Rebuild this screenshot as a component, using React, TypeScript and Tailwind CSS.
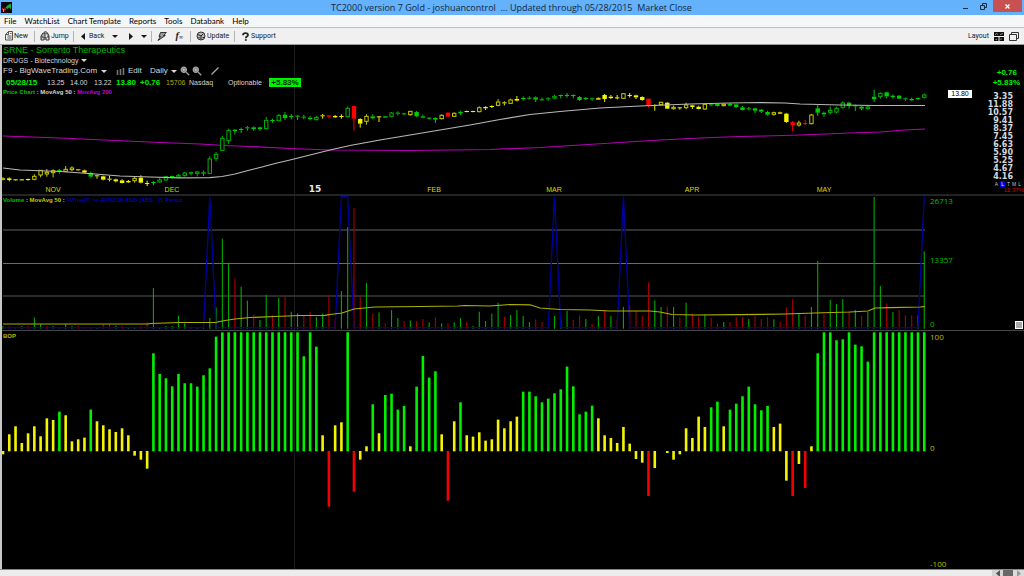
import type { ReactNode } from "react";

const STEP = 6.267;
const barX = (i: number) => 3 + i * STEP;

const PALETTE: Record<string, string> = { g: "#00cc00", y: "#f4f400", r: "#ff0000", G: "#00b400", Y: "#c8c800" };

// Candles: kind (upper case = hollow body), high, body top, body bottom, low, in thirds of a pixel.
const CANDLE_GROUPS: { base: number; rows: string }[] = [
  {
    base: 90,
    rows:
      "y 262 265 269 271;y 262 265 270 274;y 267 268 271 272;y 267 268 271 272;y 266 267 270 272;Y 253 259 268 271;Y 240 241 255 262;Y 237 247 252 260;Y 238 242 248 262;g 237 240 243 251;Y 228 238 244 246;Y 229 234 239 244;y 237 238 241 242;y 239 241 248 249;g 245 249 260 264;y 255 256 259 266;y 257 259 269 271;y 258 266 269 274;y 266 268 274 277;y 268 271 279 280;y 270 273 277 279;Y 260 265 272 278;y 256 263 278 280;y 272 279 281 288;g 273 276 278 286;G 264 270 276 278;G 258 260 270 272;g 257 258 262 266;G 252 256 261 264;G 246 249 256 260;g 245 247 251 256;G 244 246 250 259;g 242 247 251 258;G 199 207 250 252;G 186 193 205 214;G 138 145 181 183;G 116 121 152 162;g 117 119 123 133;g 113 117 120 129;g 108 112 115 122;g 109 112 117 122;g 110 112 117 122;G 81 91 116 118;g 86 90 92 98;G 72 77 92 93;g 66 74 84 90;g 72 78 80 88;g 75 77 79 90;g 74 80 82 88;g 78 83 87 91;G 78 82 89 91;y 72 76 79 86;r 75 76 80 85;y 75 78 82 84;y 73 78 81 86;G 50 55 80 82;r 48 48 86 122;y 85 87 101 113;Y 73 79 94 104;g 73 79 85 88;y 78 79 81 96;g 78 79 83 84;G 66 69 79 82;g 64 68 71 76;g 69 70 73 76;Y 63 64 74 77;g 63 66 79 82;g 74 79 83 85;g 81 83 85 89;g 82 84 89 99;Y 73 76 86 88;r 66 68 80 81;Y 67 70 79 81;g 62 65 70 75;y 62 63 66 67;y 62 63 66 67;Y 49 53 65 67;y 49 51 55 60;y 46 48 51 54;Y 27 36 46 49;y 34 37 40 46",
  },
  {
    base: 85,
    rows:
      "Y 41 45 55 57;y 33 42 47 49;g 34 39 41 47;g 34 38 41 43;g 34 37 44 51;g 38 43 46 47;g 37 40 43 47;G 29 34 39 42;g 29 30 32 40;g 24 30 33 38;g 28 30 33 40;g 33 36 45 48;g 36 39 42 45;g 38 40 43 47;Y 37 40 43 44;y 27 30 42 51;y 30 35 39 42;y 30 37 38 43;Y 24 26 40 42;y 24 30 33 38;y 29 31 37 42;y 34 36 45 47;r 41 41 63 67;y 58 60 63 77;Y 50 52 59 61;y 51 53 71 72;Y 62 67 71 74;y 66 67 69 74;Y 53 60 68 73;y 59 61 66 72;y 62 65 72 73;Y 57 58 72 74;g 54 58 61 64;g 56 57 63 65;Y 55 58 62 64;g 54 57 62 64;g 56 58 66 68;g 63 67 75 76;g 66 70 73 76",
  },
  {
    base: 60,
    rows:
      "g 143 145 152 159;g 147 149 155 159;g 153 156 164 167;Y 155 158 163 167;y 155 157 161 162;y 159 161 186 188;r 183 186 195 213;Y 182 189 195 200;r 180 189 191 195;Y 162 165 191 193;g 135 145 158 168;g 155 158 163 170;G 139 151 157 163;G 140 145 156 160;G 124 129 142 146;g 125 128 137 146;g 134 136 139 153;g 137 140 146 151;G 137 141 145 149;g 89 110 117 126;G 97 100 109 116;g 95 97 109 115;g 103 107 111 116;g 105 107 116 117;g 113 115 118 122;g 113 117 121 123;g 113 114 116 119;G 100 105 112 116",
  },
];

const CANDLES = CANDLE_GROUPS.flatMap(({ base, rows }) =>
  rows.split(";").map((row) => {
    const [kind, ...v] = row.split(" ");
    const [high, top, bottom, low] = v.map((n) => base + Number(n) / 3);
    return { kind, high, top, bottom, low };
  }),
);

// Volume: colour and height of each bar in thirds of a pixel.
const VOLUME =
  "g8 r8 r5 g8 r8 g34 g14 r8 g8 r5 g14 g8 r8 r3 r5 g2 r14 r14 g9 r8 g5 g5 r7 r19 g122 g5 g8 g8 g39 g16 r5 g2 g2 g32 g64 g270 g194 r151 g126 g84 r43 g26 g101 r41 g93 r97 g51 g46 r40 r50 g35 g45 r100 r29 g113 g305 r362 r96 g137 r46 g49 r16 g56 g32 r23 g25 r23 r29 g19 r34 g16 r16 g19 g32 r20 g8 g51 g23 g45 g78 r36 g41 g56 g38 g20 r28 r20 g1 g38 g28 g53 r26 r40 g29 r14 g38 r56 g38 r28 g65 r71 r53 r38 r139 g85 g65 r67 g65 r34 g78 r46 r35 g43 r32 r16 g20 r20 r35 r35 g29 r38 r29 r35 g28 r20 r64 r88 g46 r40 g65 g203 r43 g86 g74 g89 r53 g56 r38 g50 g395 g128 r76 g50 r56 r40 r40 g40 g232"
    .split(" ")
    .map((s) => ({ color: s[0] === "g" ? "#00aa00" : "#a80000", height: Number(s.slice(1)) / 3 }));

// Balance of power: colour and signed height of each bar in thirds of a pixel.
const BOP =
  "y-10 y51 y75 y25 y54 y75 y45 y99 y94 g119 y108 y30 y36 y41 g125 y90 y78 y66 y58 y69 y48 y-14 y-26 y-53 g294 g232 g219 g195 g232 g204 g204 g194 g228 g249 g344 g357 g357 g357 g357 g357 g357 g357 g357 g357 g357 g357 g357 g357 g285 g357 g314 y48 r-167 y78 y87 g357 r-122 y-26 y15 g141 y54 g169 g173 g125 g136 y15 g194 g286 g221 g240 y51 r-149 y90 g147 y48 y44 y57 y32 y36 y95 y69 y90 y104 g179 g179 g165 g147 g158 g174 g186 g254 g195 g111 g119 g137 y99 y48 y40 y25 y73 y23 y-24 y-35 r-135 y-51 y0 y-6 y-26 y-10 y69 y40 y104 y73 g132 g149 y75 g125 g143 g165 g194 g141 g123 g136 y73 y83 y-89 r-135 y-39 r-111 y15 g294 g357 g357 g333 g336 g357 g320 g315 g269 g357 g357 g357 g357 g357 g357 g357 g357 g357"
    .split(" ")
    .map((s) => ({
      color: s[0] === "g" ? "#00f000" : s[0] === "y" ? "#f4f400" : "#f40000",
      height: Number(s.slice(1)) / 3,
    }));

const MA50 =
  "3,168 20,170 60,171.5 95,174 120,176 150,177 180,177.8 210,177.6 222,176.5 235,174 250,170 262,167 275,163.5 290,160 310,155 330,150 350,145.5 380,140 410,135 440,130 470,125 500,119.5 530,114.5 560,111.5 600,108 640,106 690,104 730,103 760,102.5 785,103 800,104 840,105 875,105.5 925,105.5";
const MA200 =
  "3,136 60,138 115,140.5 160,142.5 200,144 225,145.5 250,146.5 290,148.5 330,150 410,150.5 490,149.5 540,147.5 580,145 620,142.5 660,140 700,138 740,136.5 765,136 800,135 850,133 880,132 905,130 925,129";
const VOLUME_MA =
  "3,324 148,324 150,323.5 180,322.5 215,322.5 225,320.5 235,319 250,317.5 275,316.5 300,315.5 325,315.3 330,314.5 342,313 354,309 375,307 420,306.5 458,306 465,305.5 490,306 510,304.5 530,304.8 540,308 560,309.5 590,310 610,311 650,311 660,312 672,314.5 695,315 740,314.6 785,314 815,313 850,312 868,311 875,308 890,307.6 920,307 925,306.5";
const TRIGGERS = new Set([33, 54, 55, 88, 99, 147]);
const TRIGGER_LINE = VOLUME.map((_, i) => `${barX(i)},${TRIGGERS.has(i) ? 196.5 : 327.7}`).join(" ");

const MONTHS = [
  { name: "NOV", x: 53 },
  { name: "DEC", x: 172 },
  { name: "FEB", x: 434 },
  { name: "MAR", x: 554 },
  { name: "APR", x: 692 },
  { name: "MAY", x: 824 },
];

const PRICE_SCALE = ["3.35", "11.88", "10.57", "9.41", "8.37", "7.45", "6.63", "5.90", "5.25", "4.67", "4.16"];

function Plot({ top, height, label, children }: { top: number; height: number; label: string; children: ReactNode }) {
  return (
    <svg
      role="img"
      aria-label={label}
      className="absolute inset-0 h-full w-full"
      viewBox={`2 ${top} 926 ${height}`}
      preserveAspectRatio="none"
    >
      <line x1="294.5" x2="294.5" y1={top} y2={top + height} stroke="#1c1c1c" />
      {children}
    </svg>
  );
}

function Caret({ dir = "down" }: { dir?: "down" | "left" | "right" }) {
  const d = dir === "down" ? "M0 2h6L3 5z" : dir === "left" ? "M5 0v7L1 3.500z" : "M1 0v7l4-3.500z";
  return (
    <svg className="h-[7px] w-[6px] shrink-0" viewBox="0 0 6 7" aria-hidden="true">
      <path d={d} fill="currentColor" />
    </svg>
  );
}

function Magnifier() {
  return (
    <svg className="size-[10px]" viewBox="0 0 10 10" aria-hidden="true">
      <circle cx="3.800" cy="3.800" r="2.600" fill="#777" stroke="#aaa" strokeWidth="1.200" />
      <path d="M2.500 3.800h2.600M3.800 2.500v2.600" stroke="#ddd" strokeWidth=".7" />
      <path d="M6 6l3.300 3.300" stroke="#999" strokeWidth="1.300" />
    </svg>
  );
}

function Divider() {
  return <span className="h-[11px] w-px shrink-0 bg-[#b4b4b4]" />;
}

function TitleBar() {
  return (
    <header className="flex h-[15px] shrink-0 items-start bg-[#64b1fc]">
      <svg className="mt-[2px] ml-px size-[11px] shrink-0" viewBox="0 0 11 11" aria-hidden="true">
        <rect width="11" height="11" fill="#0a0a0a" />
        <path d="M1 6l1.500 3L4 6.500 5 8" stroke="#e02020" strokeWidth="1.200" fill="none" />
        <path d="M2.500 10V7" stroke="#d0c020" />
        <path d="M4.500 5.500L7 3l3-1.500V7L8 5.500 6.500 7z" fill="#18b028" />
      </svg>
      <h1 className="flex-1 pl-[54px] text-center font-['Open_Sans',sans-serif] text-[9px] leading-[15px] whitespace-pre text-[#10283c]">
        {"TC2000 version 7 Gold - joshuancontrol  ... Updated through 05/28/2015  Market Close"}
      </h1>
      <div className="flex h-[12px] items-stretch pr-[2px]">
        <button aria-label="Minimize" className="flex w-[16px] items-center justify-center">
          <svg className="size-[7px]" viewBox="0 0 7 7">
            <path d="M1 5.500h5" stroke="#1c2c3c" />
          </svg>
        </button>
        <button aria-label="Restore" className="flex w-[20px] items-center justify-center">
          <svg className="size-[7px]" viewBox="0 0 7 7" fill="none" stroke="#1c2c3c">
            <path d="M.5 2.500h4v4h-4zM2.500 2V.5h4v4H5" />
          </svg>
        </button>
        <button aria-label="Close" className="flex w-[29px] items-center justify-center bg-[#c75050]">
          <svg className="size-[5px]" viewBox="0 0 5 5">
            <path d="M.5.5l4 4m0-4l-4 4" stroke="#fff" strokeWidth="1.200" />
          </svg>
        </button>
      </div>
    </header>
  );
}

function MenuBar() {
  return (
    <nav className="flex h-[13px] shrink-0 items-center gap-[8px] border-b border-[#c0c0c0] bg-[#f5f6f7] pl-[4px] font-[Lato,sans-serif] text-[8px] leading-[12px] text-black">
      {["File", "WatchList", "Chart Template", "Reports", "Tools", "Databank", "Help"].map((item) => (
        <button key={item}>{item}</button>
      ))}
    </nav>
  );
}

function Toolbar() {
  return (
    <div className="flex h-[17px] shrink-0 items-center border-b border-[#9c9c9c] bg-[#f0f0f0] pr-[5px] pl-[5px] font-[Roboto,sans-serif] text-[7px] leading-[12px] text-[#181818]">
      <button className="flex w-[29px] items-center">
        <svg className="h-[10px] w-[9px]" viewBox="0 0 9 10" fill="none" stroke="#444" strokeWidth=".9">
          <path d="M3.500.5h4v8.500h-7V3.500zM3.500.5v3h-3M2.500 5h4M2.500 7h4M5 2.500h1.500" />
        </svg>
        New
      </button>
      <Divider />
      <button className="ml-[5px] flex w-[33px] items-center gap-px">
        <svg className="h-[10px] w-[10px]" viewBox="0 0 10 10" fill="#aaa" stroke="#333" strokeWidth="1">
          <path d="M1 9V5l2-3h2v3M9 9V5L7.500 2H5.500M1 9h3V6h2v3h3M1.500 6h2M7 6h2" />
          <path d="M4 1.500C5 .3 6.500.5 7 1.500" />
        </svg>
        Jump
      </button>
      <Divider />
      <button className="ml-[6px] flex items-center gap-[3px]">
        <Caret dir="left" />
        Back
      </button>
      <button aria-label="Back history" className="ml-[8px] flex">
        <Caret />
      </button>
      <button aria-label="Forward" className="ml-[10px] flex">
        <Caret dir="right" />
      </button>
      <button aria-label="Forward history" className="mr-[4px] ml-[7px] flex">
        <Caret />
      </button>
      <Divider />
      <button aria-label="Draw" className="ml-[5px] flex">
        <svg className="size-[10px]" viewBox="0 0 10 10">
          <path d="M3.500 1.500h5.800L6.500 4.500h1.800L1 9.500l2.500-4H2z" fill="#999" stroke="#222" strokeWidth=".9" />
        </svg>
      </button>
      <button aria-label="Formula" className="ml-[8px] flex items-end font-['Liberation_Serif',serif] text-[10px] font-bold italic">
        f<span className="text-[6px] leading-[10px]">∞</span>
      </button>
      <span className="ml-[7px]">
        <span className="block h-[11px] w-px bg-[#b4b4b4]" />
      </span>
      <button className="ml-[5px] flex w-[38px] items-center gap-px">
        <svg className="size-[10px]" viewBox="0 0 10 10">
          <circle cx="5" cy="5" r="4" fill="#bbb" stroke="#333" />
          <path d="M2 3.500l3 1.500 2.500-2.500M5 5v3.500M6.500 6.500h2M2.500 6l1.500 1.500" stroke="#222" fill="none" />
        </svg>
        Update
      </button>
      <Divider />
      <button className="ml-[6px] flex items-center gap-px">
        <svg className="size-[9px]" viewBox="0 0 9 9" fill="none">
          <path d="M2 3.200C2 .5 7 .5 7 3c0 1.800-2.200 1.300-2.200 3.200" stroke="#222" strokeWidth="1.800" />
          <path d="M4.800 7.200v1.600" stroke="#222" strokeWidth="1.800" />
        </svg>
        Support
      </button>
      <button className="ml-auto flex items-center gap-[5px]">
        Layout
        <svg className="h-[9px] w-[10px]" viewBox="0 0 10 9">
          <path d="M0 0h10v4H0zM0 5h4.500v4H0zM5.500 5H10v4H5.500z" fill="#111" />
          <path d="M1 3l1.500-1.500L4 2.500M6 2.500l3-1M1.500 7.500h1.500M7 6.500v1.500" stroke="#bbb" strokeWidth=".7" fill="none" />
        </svg>
      </button>
      <button aria-label="Windows" className="ml-[5px] flex">
        <svg className="h-[9px] w-[10px]" viewBox="0 0 10 9" fill="#f0f0f0" stroke="#333">
          <path d="M2.500.5h7v6h-7z" />
          <path d="M.5 2.500h7v6h-7z" />
        </svg>
      </button>
    </div>
  );
}

function ChartHeader() {
  return (
    <div className="absolute top-0 left-px text-[7px] whitespace-nowrap text-[#d8d8d8]">
      <h2 className="text-[9px] leading-[11px] text-[#00b400]">SRNE - Sorrento Therapeutics</h2>
      <button className="flex items-center gap-[3px] leading-[9px]">
        DRUGS - Biotechnology <Caret />
      </button>
      <div className="flex h-[12px] items-center text-[8px] leading-[12px]">
        <button className="flex w-[113px] items-center gap-[4px]">
          F9 - BigWaveTrading.Com <Caret />
        </button>
        <button className="flex w-[34px] items-center gap-[3px]">
          <svg className="h-[7px] w-[9px]" viewBox="0 0 9 7">
            <path d="M1.500 2v5M4.500 1v6M7.500 0v7" stroke="#777" strokeWidth="1.600" />
          </svg>
          Edit
        </button>
        <button className="flex w-[30px] items-center gap-[3px]">
          Daily <Caret />
        </button>
        <button aria-label="Zoom out" className="flex w-[12px]">
          <Magnifier />
        </button>
        <button aria-label="Zoom in" className="flex w-[19px]">
          <Magnifier />
        </button>
        <button aria-label="Draw line" className="flex">
          <svg className="size-[8px]" viewBox="0 0 8 8">
            <path d="M.5 7.500L7.500.5" stroke="#aaa" strokeWidth="1.300" />
          </svg>
        </button>
      </div>
      <div className="flex h-[11px] items-center leading-[9px]">
        <b className="w-[44px] pl-[3px] text-[8px] text-[#00f000]">05/28/15</b>
        <span className="w-[23px]">13.25</span>
        <span className="w-[24px]">14.00</span>
        <span className="w-[22px]">13.22</span>
        <b className="w-[24px] text-[8px] text-[#00f000]">13.80</b>
        <b className="w-[26px] text-[8px] text-[#00f000]">+0.76</b>
        <span className="w-[23px] text-[#b4a800]">15706</span>
        <span className="w-[39px]">Nasdaq</span>
        <span className="w-[41px]">Optionable</span>
        <b className="w-[32px] bg-[#00f000] text-center text-[8px] text-[#003000]">+5.83%</b>
      </div>
      <p className="text-[6px] leading-[9px] font-bold">
        <span className="text-[#00c000]">Price Chart</span> : MovAvg 50 : <span className="text-[#c800c8]">MovAvg 200</span>
      </p>
    </div>
  );
}

function PricePanel() {
  return (
    <section className="flex h-[151px] shrink-0 border-b-2 border-[#242424]">
      <div className="relative min-w-0 flex-1">
        <Plot top={45} height={149} label="Price chart">
          <polyline points={MA200} fill="none" stroke="#b400b4" strokeWidth="1.200" />
          {CANDLES.map((c, i) => {
            const color = PALETTE[c.kind];
            const hollow = c.kind === "G" || c.kind === "Y";
            const x = barX(i);
            return (
              <g key={i} stroke={color} strokeWidth="1">
                <line x1={x} x2={x} y1={c.high} y2={c.top} />
                <line x1={x} x2={x} y1={c.bottom} y2={c.low} />
                <rect
                  x={hollow ? x - 1.7 : x - 2.2}
                  y={c.top}
                  width={hollow ? 3.4 : 4.4}
                  height={Math.max(c.bottom - c.top, 1)}
                  fill={hollow ? "#000" : color}
                  stroke={hollow ? color : "none"}
                />
              </g>
            );
          })}
          <polyline points={MA50} fill="none" stroke="#b8b8b8" strokeWidth="1.200" />
        </Plot>
        <ChartHeader />
        {MONTHS.map((m) => (
          <span
            key={m.name}
            className="absolute bottom-0 -translate-x-1/2 text-[7px] leading-[8px] text-[#d8d800]"
            style={{ left: `${((m.x - 2) / 926) * 100}%` }}
          >
            {m.name}
          </span>
        ))}
        <b
          className="absolute bottom-0 -translate-x-1/2 bg-black font-['DejaVu_Sans',sans-serif] text-[9px] leading-[9px] text-[#e8e8e8]"
          style={{ left: `${((315 - 2) / 926) * 100}%` }}
        >
          15
        </b>
      </div>
      <div className="relative flex w-[96px] flex-col items-end pt-[23px] text-right">
        <b className="pr-[7px] text-[8px] leading-[10px] text-[#00f000]">+0.76</b>
        <b className="pr-[4px] text-[8px] leading-[10px] text-[#00f000]">+5.83%</b>
        <ul className="pt-[5px] pr-[11px] font-['DejaVu_Sans',sans-serif] text-[8px] font-bold text-[#d8d8d8]">
          {PRICE_SCALE.map((p) => (
            <li key={p} className="leading-[8px]">
              {p}
            </li>
          ))}
        </ul>
        <span className="absolute top-[45px] left-[20px] w-[24px] bg-white text-center text-[7px] leading-[8px] text-black">
          13.80
        </span>
        <div className="flex gap-[2px] pr-[3px] text-[5px] leading-[6px] text-[#c0c0c0]">
          <span>A</span>
          <span className="bg-[#0000e0] px-px text-white">L</span>
          <span>T</span>
          <span>M</span>
          <span>L</span>
        </div>
        <span className="text-[6px] leading-[6px] text-[#d00000]">12.37%</span>
      </div>
    </section>
  );
}

function VolumePanel() {
  return (
    <section className="flex h-[135px] shrink-0 border-b border-[#484848]">
      <div className="relative min-w-0 flex-1">
        <Plot top={196} height={134} label="Volume">
          <line x1="3" x2="925" y1="230" y2="230" stroke="#303030" strokeWidth="2" />
          <line x1="3" x2="925" y1="263.5" y2="263.5" stroke="#6c6c6c" />
          <line x1="3" x2="925" y1="296" y2="296" stroke="#2c2c2c" strokeWidth="2" />
          {VOLUME.map((v, i) => (
            <rect key={i} x={barX(i) - 0.55} y={328.7 - v.height} width="1.100" height={v.height} fill={v.color} />
          ))}
          <polyline points={TRIGGER_LINE} fill="none" stroke="#0000a0" strokeWidth="1.300" />
          <polyline points={VOLUME_MA} fill="none" stroke="#b0b000" strokeWidth="1.200" />
        </Plot>
        <p className="absolute top-0 left-px text-[6px] leading-[8px] font-bold whitespace-nowrap text-[#d0d0d0]">
          <span className="text-[#00c000]">Volume</span> : <span className="text-[#c8c800]">MovAvg 50</span> :{" "}
          <span className="font-normal text-[#0000e0]">{"%True(C >= AVGC10 AND (ABS...)1 Period"}</span>
        </p>
      </div>
      <div className="flex w-[96px] justify-between pl-[2px]">
        <ul className="flex flex-col justify-between pb-px font-['Open_Sans',sans-serif] text-[8px] leading-[10px] text-[#00c000]">
          <li>26713</li>
          <li className="pb-[6px]">13357</li>
          <li>0</li>
        </ul>
        <button aria-label="Resize panel" className="mr-px mb-px size-[8px] self-end border border-white bg-[#a8a8a8]" />
      </div>
    </section>
  );
}

function BopPanel() {
  return (
    <section className="flex min-h-[238px] flex-1">
      <div className="relative min-w-0 flex-1">
        <Plot top={331} height={238} label="Balance of power">
          {BOP.map((b, i) => (
            <rect
              key={i}
              x={barX(i) - 1.3}
              y={b.height > 0 ? 451.3 - b.height : 451}
              width="2.600"
              height={Math.abs(b.height)}
              fill={b.color}
            />
          ))}
        </Plot>
        <p className="absolute top-px left-px text-[6px] leading-[8px] font-bold text-[#b8b800]">BOP</p>
      </div>
      <ul className="flex w-[96px] flex-col justify-between pl-[2px] font-['Open_Sans',sans-serif] text-[8px] leading-[11px] text-[#c0b800]">
        <li>100</li>
        <li className="pb-[6px]">0</li>
        <li>-100</li>
      </ul>
    </section>
  );
}

export default function App() {
  return (
    <div className="flex min-h-screen flex-col bg-black font-['Liberation_Sans',Arial,sans-serif]">
      <TitleBar />
      <MenuBar />
      <Toolbar />
      <main className="flex flex-1 flex-col border-l-2 border-[#c8c8c8]">
        <PricePanel />
        <VolumePanel />
        <BopPanel />
      </main>
      <footer className="flex h-[7px] shrink-0 justify-end border-t border-[#888] bg-[#ececec]">
        <button aria-label="Scroll left" className="flex w-[11px] items-center justify-center bg-[#d4d4d4] text-[#555]">
          <Caret dir="left" />
        </button>
        <button aria-label="Scroll position" className="w-[10px] bg-[#686868]" />
        <button aria-label="Scroll right" className="flex w-[11px] items-center justify-center bg-[#dcdcdc] text-[#999]">
          <Caret dir="right" />
        </button>
      </footer>
    </div>
  );
}
